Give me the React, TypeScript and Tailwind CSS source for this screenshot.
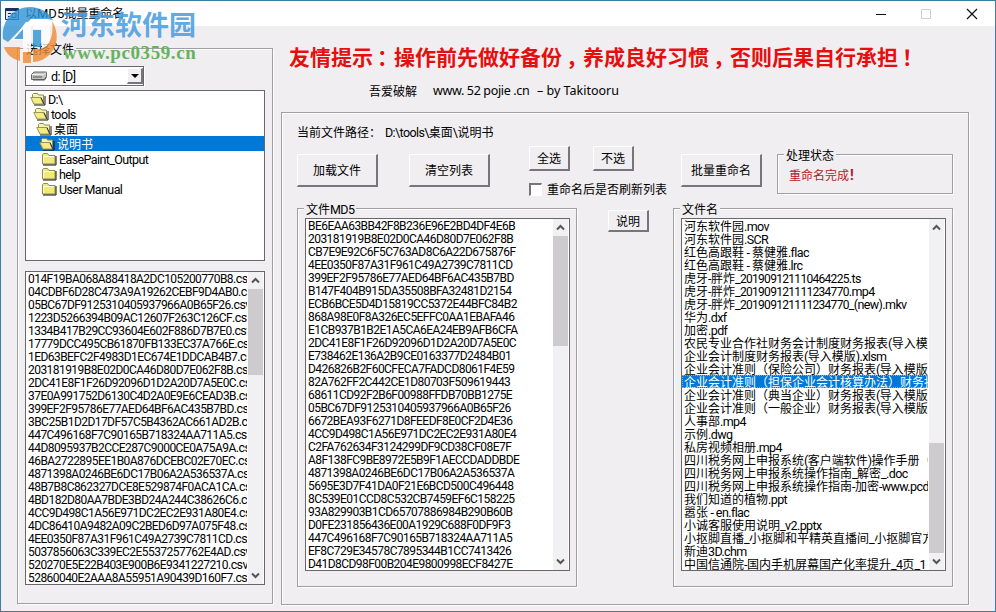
import { Fragment, type ReactNode } from 'react';

const folders = [
  { name: 'D:\\', indent: 'pl-[4px]', open: true },
  { name: 'tools', indent: 'pl-[7px]', open: true },
  { name: '桌面', indent: 'pl-[10px]', open: true },
  { name: '说明书', indent: 'pl-[13px]', open: true, selected: true },
  { name: 'EasePaint_Output', indent: 'pl-[15px]' },
  { name: 'help', indent: 'pl-[15px]' },
  { name: 'User Manual', indent: 'pl-[15px]' },
];

const csvFiles = [
  '014F19BA068A88418A2DC105200770B8.csv',
  '04CDBF6D28C473A9A19262CEBF9D4AB0.csv',
  '05BC67DF9125310405937966A0B65F26.csv',
  '1223D5266394B09AC12607F263C126CF.csv',
  '1334B417B29CC93604E602F886D7B7E0.csv',
  '17779DCC495CB61870FB133EC37A766E.csv',
  '1ED63BEFC2F4983D1EC674E1DDCAB4B7.csv',
  '203181919B8E02D0CA46D80D7E062F8B.csv',
  '2DC41E8F1F26D92096D1D2A20D7A5E0C.csv',
  '37E0A991752D6130C4D2A0E9E6CEAD3B.csv',
  '399EF2F95786E77AED64BF6AC435B7BD.csv',
  '3BC25B1D2D17DF57C5B4362AC661AD2B.csv',
  '447C496168F7C90165B718324AA711A5.csv',
  '44D8095937B2CCE287C9000CE0A75A9A.csv',
  '46BA2722895EE1B0A876DCEBC02E70EC.csv',
  '4871398A0246BE6DC17B06A2A536537A.csv',
  '48B7B8C862327DCE8E529874F0ACA1CA.csv',
  '4BD182D80AA7BDE3BD24A244C38626C6.csv',
  '4CC9D498C1A56E971DC2EC2E931A80E4.csv',
  '4DC86410A9482A09C2BED6D97A075F48.csv',
  '4EE0350F87A31F961C49A2739C7811CD.csv',
  '5037856063C339EC2E5537257762E4AD.csv',
  '520270E5E22B403E900B6E9341227210.csv',
  '52860040E2AAA8A55951A90439D160F7.csv',
];

const hashes = [
  'BE6EAA63BB42F8B236E96E2BD4DF4E6B',
  '203181919B8E02D0CA46D80D7E062F8B',
  'CB7E9E92C6F5C763AD8C6A22D675876F',
  '4EE0350F87A31F961C49A2739C7811CD',
  '399EF2F95786E77AED64BF6AC435B7BD',
  'B147F404B915DA35508BFA32481D2154',
  'ECB6BCE5D4D15819CC5372E44BFC84B2',
  '868A98E0F8A326EC5EFFC0AA1EBAFA46',
  'E1CB937B1B2E1A5CA6EA24EB9AFB6CFA',
  '2DC41E8F1F26D92096D1D2A20D7A5E0C',
  'E738462E136A2B9CE0163377D2484B01',
  'D426826B2F60CFECA7FADCD8061F4E59',
  '82A762FF2C442CE1D80703F509619443',
  '68611CD92F2B6F00988FFDB70BB1275E',
  '05BC67DF9125310405937966A0B65F26',
  '6672BEA93F6271D8FEEDF8E0CF2D4E36',
  '4CC9D498C1A56E971DC2EC2E931A80E4',
  'C2FA762634F3124299DF9CD38CF08E7F',
  'A8F138FC9BE8972E5B9F1AECCDADDBDE',
  '4871398A0246BE6DC17B06A2A536537A',
  '5695E3D7F41DA0F21E6BCD500C496448',
  '8C539E01CCD8C532CB7459EF6C158225',
  '93A829903B1CD65707886984B290B60B',
  'D0FE231856436E00A1929C688F0DF9F3',
  '447C496168F7C90165B718324AA711A5',
  'EF8C729E34578C7895344B1CC7413426',
  'D41D8CD98F00B204E9800998ECF8427E',
];

const fileNames = [
  '河东软件园.mov',
  '河东软件园.SCR',
  '红色高跟鞋 - 蔡健雅.flac',
  '红色高跟鞋 - 蔡健雅.lrc',
  '虎牙-胖炸_201909121110464225.ts',
  '虎牙-胖炸_201909121111234770.mp4',
  '虎牙-胖炸_201909121111234770_(new).mkv',
  '华为.dxf',
  '加密.pdf',
  '农民专业合作社财务会计制度财务报表(导入模版).xlsm',
  '企业会计制度财务报表(导入模版).xlsm',
  '企业会计准则（保险公司）财务报表(导入模版).xlsm',
  '企业会计准则（担保企业会计核算办法）财务报表',
  '企业会计准则（典当企业）财务报表(导入模版).xlsm',
  '企业会计准则（一般企业）财务报表(导入模版).xlsm',
  '人事部.mp4',
  '示例.dwg',
  '私房视频相册.mp4',
  '四川税务网上申报系统(客户端软件)操作手册（',
  '四川税务网上申报系统操作指南_解密_.doc',
  '四川税务网上申报系统操作指南-加密-www.pcd',
  '我们知道的植物.ppt',
  '嚣张 - en.flac',
  '小诚客服使用说明_v2.pptx',
  '小抠脚直播_小抠脚和平精英直播间_小抠脚官方',
  '新迪3D.chm',
  '中国信通院-国内手机屏幕国产化率提升_4页_1',
];

function runClass(part: string) {
  if (/^\d{8,}$/.test(part)) return "font-['Roboto',sans-serif] text-[12px] tracking-[-0.7px]";
  if (/^[0-9A-F]{8,}$/.test(part)) return "font-['Roboto',sans-serif] text-[12px] tracking-[-0.55px]";
  return "font-['Roboto',sans-serif] text-[12.5px] tracking-[-0.6px]";
}

// Latin runs are set tighter than the full-width characters around them
function Label({ text }: { text: string }) {
  return (
    <>
      {text.split(/([0-9A-F]{8,}|[\x20-\x7e]+?(?=[0-9A-F]{8,}|[^\x20-\x7e]|$))/).map((part, index) =>
        index % 2 ? <span key={index} className={runClass(part)}>{part}</span> : <Fragment key={index}>{part}</Fragment>,
      )}
    </>
  );
}

function Button({ className, children }: { className: string; children: ReactNode }) {
  return (
    <button className={`flex shrink-0 items-center justify-center border-t border-l border-t-white border-l-white border-r-2 border-b-2 border-r-[#77757a] border-b-[#77757a] ${className}`}>
      {children}
    </button>
  );
}

function Group({ title, className, children }: { title?: string; className: string; children?: ReactNode }) {
  return (
    <div className={`flex flex-col items-start border border-[#a09fa2] shadow-[1px_1px_0_#fff,inset_1px_1px_0_#fff] ${className}`}>
      {title && <div className="-mt-[7px] ml-[6px] h-[14px] shrink-0 bg-[#f0eef1] px-[2px] leading-[14px]"><Label text={title} /></div>}
      {children}
    </div>
  );
}

function Chevron({ up }: { up?: boolean }) {
  return (
    <svg width="9" height="7" viewBox="0 0 9 7" fill="none" stroke="#555" strokeWidth="2">
      <path d={up ? 'M1 5.5 4.5 2 8 5.5' : 'M1 1.5 4.5 5 8 1.5'} />
    </svg>
  );
}

function ListBox({ items, className, thumb, selected = -1 }: { items: string[]; className: string; thumb: string; selected?: number }) {
  return (
    <div className={`flex shrink-0 border border-[#68676b] bg-white ${className}`}>
      <ul className="mr-px min-w-0 flex-1 overflow-hidden">
        {items.map((item, index) => (
          <li
            key={index}
            className={`h-[13px] pl-[2px] whitespace-pre ${index === selected ? 'bg-[#0078d7] text-white outline-1 -outline-offset-1 outline-dotted outline-[#d59a5a]' : ''}`}
          >
            <Label text={item} />
          </li>
        ))}
      </ul>
      <div className="mr-px flex w-[15px] shrink-0 flex-col items-center bg-[#f1f0f2]">
        <div className="flex h-[17px] shrink-0 items-center"><Chevron up /></div>
        <div className={`w-full shrink-0 bg-[#cdcbce] ${thumb}`} />
        <div className="mt-auto flex h-[17px] shrink-0 items-center"><Chevron /></div>
      </div>
    </div>
  );
}

function FolderIcon({ open }: { open?: boolean }) {
  if (open) {
    return (
      <svg width="16" height="14" viewBox="0 0 16 14" className="shrink-0">
        <path d="M2.500 8V2.500l1-1h4l1 1.500h5V12H4z" fill="#f7f3b0" stroke="#8d8b50" />
        <path d="M15 4v9H4" fill="none" stroke="#111" />
        <path d="M.7 5.500H10.500l3 6.500H4z" fill="#f3ec84" stroke="#9a9858" />
        <path d="M11 5.500 14 12" stroke="#333" />
      </svg>
    );
  }
  return (
    <svg width="16" height="14" viewBox="0 0 16 14" className="shrink-0">
      <path d="M1.500 12V2.500l1-1h4L8 3.500h6V12z" fill="#f0ea78" stroke="#8d8b50" />
      <path d="M2.500 11V4.500H13" fill="none" stroke="#fffde0" />
      <path d="M15 4v9H2" fill="none" stroke="#111" />
    </svg>
  );
}

function Watermark() {
  return (
    <div className="absolute top-[5px] left-0 flex">
      <svg width="57" height="58" viewBox="0 0 57 58">
        <g opacity=".8">
          <path d="M2 33C0 14 13 1 29 1c10 0 18 5 23 13l-6-1H30L7 36z" fill="#2e93d6" />
          <path d="M7 39 25 16h5v37h-8V34H11z" fill="#fff" />
          <path d="M32 15h11c5 0 6 4 6 9v17h-8V23h-9z" fill="#fff" />
          <path d="M32 24h8v17h-8zM13 33l9-10v10z" fill="#2e93d6" />
          <path d="M51 15c9 14 5 32-10 39-3 1-6 2-9 2V43h8c9-2 13-15 11-28z" fill="#f08a32" />
          <path d="M3 41h16v14C11 53 5 48 3 41zM22 46h8v11h-8z" fill="#f08a32" />
        </g>
      </svg>
      <div className="ml-[3px] pt-[2px]">
        <div className="h-[32px] font-['Noto_Sans_CJK_SC',sans-serif] text-[27px] leading-[32px] font-bold whitespace-nowrap text-[#4b9fe2]/90">河东软件园</div>
        <div className="mt-[3px] ml-[2px] font-['Liberation_Serif',serif] text-[19px] leading-[20px] font-bold tracking-[0.6px] text-[#65b35c]">www.pc0359.cn</div>
      </div>
    </div>
  );
}

function TitleBar() {
  return (
    <div className="flex h-[25px] shrink-0 items-center bg-white pl-[4px]">
      <svg width="14" height="12" viewBox="0 0 14 12">
        <path d="M.5.500h13v11H.5z" fill="#dce7ed" stroke="#1c2f62" />
        <path d="M1 2h12" stroke="#1c2f62" strokeWidth="2" />
        <path d="M3 5.500h3M3 8.500h2M7 5.500h4v4H7z" fill="none" stroke="#1c2f62" />
      </svg>
      <div className="ml-[6px] leading-[14px]">以<span className="font-['Roboto',sans-serif] text-[13px]">MD5</span>批量重命名</div>
      <div className="mr-[17px] ml-auto flex items-center">
        <svg width="102" height="12" viewBox="0 0 102 12" fill="none">
          <path d="M0 6.500h10" stroke="#111" />
          <path d="M45.500 1.500h9v9h-9z" stroke="#cfcfcf" />
          <path d="M91 1 101 11M101 1 91 11" stroke="#111" strokeWidth="1.200" />
        </svg>
      </div>
    </div>
  );
}

export default function App() {
  return (
    <div className="relative flex h-[612px] w-[996px] flex-col overflow-hidden border border-[#3a7ea6] bg-[#f0eef1] font-['Noto_Sans_CJK_SC',sans-serif] text-[12px] text-black">
      <TitleBar />

      <div className="flex flex-1">
        <Group title="选择文件" className="mt-[22px] ml-[16px] h-[556px] w-[256px]">
          <div className="mt-[10px] ml-[7px] flex h-[20px] w-[119px] items-center border border-[#68676b] bg-white pl-[5px] shadow-[1px_1px_0_#fff]">
            <svg width="16" height="10" viewBox="0 0 16 10">
              <path d="M.5 3.500 3 1h12.500v4.500L13 8.500H.5z" fill="#c4c4c4" stroke="#666" />
              <path d="M1 3.500h12l2-2" fill="none" stroke="#eee" />
              <path d="M2 6h9M2 9h11.500l2-3" fill="none" stroke="#555" />
            </svg>
            <span className="ml-[4px] pt-px"><Label text="d: [D]" /></span>
            <div className="ml-auto flex h-[16px] w-[16px] items-center justify-center border-t border-l border-r-2 border-b-2 border-t-white border-l-white border-r-[#77757a] border-b-[#77757a] bg-[#f0eef1]">
              <svg width="8" height="4" viewBox="0 0 8 4"><path d="M0 0h8L4 4z" /></svg>
            </div>
          </div>

          <div className="mt-[4px] ml-[7px] h-[171px] w-[240px] border border-[#68676b] bg-white">
            {folders.map((folder) => (
              <div key={folder.name} className={`flex h-[15px] items-center ${folder.indent} ${folder.selected ? 'bg-[#0078d7] text-white' : ''}`}>
                <FolderIcon open={folder.open} />
                <span className="ml-[2px] leading-[15px]"><Label text={folder.name} /></span>
              </div>
            ))}
          </div>

          <ListBox items={csvFiles} className="mt-[10px] ml-[7px] h-[314px] w-[240px] leading-[12px]" thumb="h-[86px]" />
        </Group>

        <div className="ml-[8px] flex w-[688px] flex-col">
          <h1 className="mt-[13px] ml-[8px] h-[34px] text-[21px] leading-[34px] font-bold whitespace-nowrap text-[#e60f10]">
            {'友情提示：操作前先做好备份，养成良好习惯，否则后果自行承担！'.split(/([：，！])/).map((part, index) => (
              <span key={index} className={index % 2 ? 'inline-block w-[21px] pl-[4px]' : ''}>{part}</span>
            ))}
          </h1>
          <div className="mt-[10px] ml-[88px] flex h-[16px] items-center whitespace-pre">
            吾爱破解
            <span className="ml-[16px] w-[104px] font-['Noto_Sans',sans-serif] text-[12.5px] tracking-[-0.35px]">www. 52 pojie .cn</span>
            <span className="font-['Noto_Sans',sans-serif] text-[12.5px]">– by Takitooru</span>
          </div>

          <Group className="mt-[13px] h-[493px] w-[688px]">
            <div className="mt-[12px] ml-[15px] flex h-[14px] leading-[14px]">
              <span className="w-[88px]">当前文件路径：</span>
              <span><Label text="D:\tools\桌面\说明书" /></span>
            </div>

            <div className="mt-[7px] ml-[15px] flex h-[50px] items-start">
              <Button className="mt-[8px] h-[33px] w-[81px]">加载文件</Button>
              <Button className="mt-[8px] ml-[31px] h-[33px] w-[81px]">清空列表</Button>
              <div className="ml-[39px] w-[138px]">
                <div className="flex gap-[23px]">
                  <Button className="h-[25px] w-[41px]">全选</Button>
                  <Button className="h-[25px] w-[41px]">不选</Button>
                </div>
                <label className="mt-[11px] flex h-[14px] items-center whitespace-nowrap">
                  <span className="mr-[5px] h-[13px] w-[13px] border-t-2 border-l-2 border-r border-b border-t-[#77757a] border-l-[#77757a] border-r-white border-b-white bg-white" />
                  重命名后是否刷新列表
                </label>
              </div>
              <Button className="mt-[8px] ml-[14px] h-[33px] w-[81px]">批量重命名</Button>
              <Group title="处理状态" className="mt-[8px] ml-[15px] h-[40px] w-[176px]">
                <div className="mt-[5px] ml-[11px] leading-[16px] text-[#b3191d]">重命名完成<b className="ml-px font-['Roboto',sans-serif] text-[14px]">!</b></div>
              </Group>
            </div>

            <div className="mt-[12px] ml-[15px] flex items-start">
              <Group title="文件MD5" className="h-[379px] w-[280px]">
                <ListBox items={hashes} className="mt-[2px] ml-[7px] h-[353px] w-[265px] leading-[12px]" thumb="h-[110px]" />
              </Group>
              <Button className="mt-[2px] ml-[31px] h-[22px] w-[41px]">说明</Button>
              <Group title="文件名" className="ml-[24px] h-[379px] w-[280px]">
                <ListBox items={fileNames} selected={12} className="mt-[2px] ml-[7px] h-[353px] w-[265px] leading-[13px]" thumb="mt-[207px] h-[110px]" />
              </Group>
            </div>
          </Group>
        </div>
      </div>

      <Watermark />
    </div>
  );
}
